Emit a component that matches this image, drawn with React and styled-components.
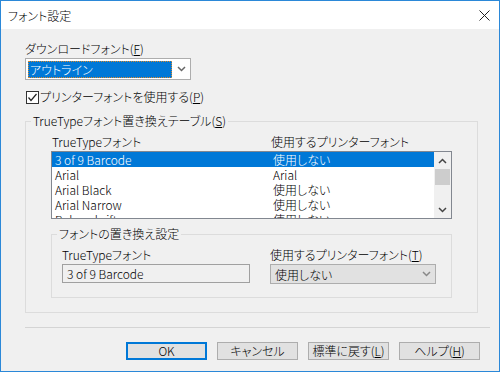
import styled, { createGlobalStyle } from 'styled-components';

const GlobalStyle = createGlobalStyle`
  html, body {
    margin: 0;
    padding: 0;
    background: #fff;
  }
  body {
    font-family: "Noto Sans CJK JP", "Noto Sans", sans-serif;
    font-size: 12px;
    font-weight: 300;
    color: #000;
    font-feature-settings: "palt";
  }
  u {
    text-underline-offset: 1px;
  }
`;

const Window = styled.div`
  width: 500px;
  height: 372px;
  box-sizing: border-box;
  border: 1px solid #2b88d8;
  background: #f0f0f0;
  display: flex;
  flex-direction: column;
`;

const TitleBar = styled.div`
  height: 28px;
  background: #fff;
  display: flex;
  align-items: center;
  justify-content: space-between;
  padding: 0 9px 0 7px;
`;

const Body = styled.div`
  flex: 1;
  display: flex;
  flex-direction: column;
  padding: 13px 0 0 24px;
`;

const Label = styled.div`
  line-height: 14px;
  white-space: nowrap;
`;

const Combo = styled.div`
  box-sizing: border-box;
  width: ${(p) => p.$width}px;
  height: ${(p) => p.$height}px;
  margin-top: 2px;
  border: 1px solid #adadad;
  background: ${(p) => (p.$flat ? '#e1e1e1' : '#fff')};
  display: flex;
  align-items: center;
  padding: 0 0 0 ${(p) => (p.$flat ? 4 : 2)}px;
`;

const ComboValue = styled.div`
  flex: 1;
  height: 17px;
  line-height: 17px;
  box-sizing: border-box;
  padding-left: ${(p) => (p.$selected ? 2 : 0)}px;
  background: ${(p) => (p.$selected ? '#0078d7' : 'transparent')};
  color: ${(p) => (p.$selected ? '#fff' : '#000')};
  outline: ${(p) => (p.$selected ? '1px dotted #d9892c' : 'none')};
  outline-offset: -1px;
`;

const ArrowBox = styled.div`
  width: 18px;
  display: flex;
  justify-content: center;
  align-items: center;
`;

const CheckRow = styled.div`
  margin-top: 10px;
  display: flex;
  align-items: center;
  gap: 1px;
  line-height: 14px;
`;

const CheckBox = styled.div`
  width: 13px;
  height: 13px;
  box-sizing: border-box;
  border: 1px solid #333;
  background: #fff;
  margin-left: 1px;
  display: flex;
  align-items: center;
  justify-content: center;
`;

const GroupBox = styled.div`
  box-sizing: border-box;
  width: ${(p) => p.$width};
  margin-top: ${(p) => p.$top}px;
  border: 1px solid #dcdcdc;
  padding: 0 ${(p) => p.$pad}px ${(p) => p.$bottom}px;
  display: flex;
  flex-direction: column;
`;

const GroupTitle = styled.div`
  align-self: flex-start;
  margin: -8px 0 0 ${(p) => p.$shift}px;
  padding: 0 2px;
  background: #f0f0f0;
  line-height: 14px;
  white-space: nowrap;
`;

const Columns = styled.div`
  display: grid;
  grid-template-columns: 219px 1fr;
  margin-top: 7px;
  padding-left: 1px;
  line-height: 14px;
`;

const ListBox = styled.div`
  margin-top: 2px;
  height: 68px;
  box-sizing: border-box;
  border: 1px solid #828790;
  background: #fff;
  display: flex;
`;

const Rows = styled.div`
  flex: 1;
  overflow: hidden;
`;

const Row = styled.div`
  height: 15px;
  line-height: 16px;
  display: grid;
  grid-template-columns: 218px 1fr;
  padding-left: 3px;
  white-space: nowrap;
  background: ${(p) => (p.$selected ? '#0078d7' : 'transparent')};
  color: ${(p) => (p.$selected ? '#fff' : '#000')};
`;

const ScrollBar = styled.div`
  width: 17px;
  background: #f0f0f0;
  display: flex;
  flex-direction: column;
`;

const ScrollButton = styled.div`
  height: 17px;
  display: flex;
  align-items: center;
  justify-content: center;
`;

const Thumb = styled.div`
  height: 16px;
  margin: 0 1px;
  background: #cdcdcd;
`;

const Track = styled.div`
  flex: 1;
`;

const SettingsGrid = styled.div`
  display: grid;
  grid-template-columns: 208px 166px;
  margin-top: 7px;
`;

const Field = styled.div`
  display: flex;
  flex-direction: column;
`;

const TextBox = styled.div`
  box-sizing: border-box;
  width: 188px;
  height: 19px;
  margin-top: 2px;
  border: 1px solid #a0a0a0;
  background: #f0f0f0;
  line-height: 17px;
  padding-left: 4px;
`;

const Separator = styled.div`
  width: 465px;
  height: 1px;
  margin-top: 14px;
  background: #d4d4d4;
`;

const ButtonRow = styled.div`
  display: flex;
  justify-content: flex-end;
  gap: 10px;
  margin: 14px 19px 0 0;
`;

const Button = styled.div`
  box-sizing: border-box;
  width: 81px;
  height: 18px;
  line-height: 16px;
  text-align: center;
  background: #e1e1e1;
  border: 1px solid ${(p) => (p.$default ? '#0078d7' : '#adadad')};
  box-shadow: ${(p) => (p.$default ? 'inset 0 0 0 1px #0078d7' : 'none')};
`;

const Chevron = ({ up, color = '#444' }) => (
  <svg width="9" height="6" viewBox="0 0 9 6">
    <polyline
      points={up ? '1,5 4.5,1.5 8,5' : '1,1 4.5,4.5 8,1'}
      fill="none"
      stroke={color}
      strokeWidth="1.5"
    />
  </svg>
);

const fonts = [
  ['3 of 9 Barcode', '使用しない'],
  ['Arial', 'Arial'],
  ['Arial Black', '使用しない'],
  ['Arial Narrow', '使用しない'],
  ['Bahnschrift', '使用しない'],
];

export default function App() {
  return (
    <>
      <GlobalStyle />
      <Window>
        <TitleBar>
          <span>フォント設定</span>
          <svg width="11" height="11" viewBox="0 0 11 11">
            <path d="M0.5 0.5 L10.5 10.5 M10.5 0.5 L0.5 10.5" stroke="#222" strokeWidth="1" />
          </svg>
        </TitleBar>
        <Body>
          <Label>
            ダウンロードフォント(<u>F</u>)
          </Label>
          <Combo $width={166} $height={22}>
            <ComboValue $selected>アウトライン</ComboValue>
            <ArrowBox>
              <Chevron color="#666" />
            </ArrowBox>
          </Combo>

          <CheckRow>
            <CheckBox>
              <svg width="11" height="11" viewBox="0 0 11 11">
                <polyline points="1.5,5.5 4,8.5 9.5,2" fill="none" stroke="#222" strokeWidth="1.2" />
              </svg>
            </CheckBox>
            <span>
              プリンターフォントを使用する(<u>P</u>)
            </span>
          </CheckRow>

          <GroupBox $width="453px" $top={17} $pad={25} $bottom={14}>
            <GroupTitle $shift={-20}>
              TrueTypeフォント置き換えテーブル(<u>S</u>)
            </GroupTitle>
            <Columns>
              <span>TrueTypeフォント</span>
              <span>使用するプリンターフォント</span>
            </Columns>
            <ListBox>
              <Rows>
                {fonts.map(([name, printer], i) => (
                  <Row key={name} $selected={i === 0}>
                    <span>{name}</span>
                    <span>{printer}</span>
                  </Row>
                ))}
              </Rows>
              <ScrollBar>
                <ScrollButton>
                  <Chevron up />
                </ScrollButton>
                <Thumb />
                <Track />
                <ScrollButton>
                  <Chevron />
                </ScrollButton>
              </ScrollBar>
            </ListBox>

            <GroupBox $width="100%" $top={15} $pad={10} $bottom={13}>
              <GroupTitle $shift={-5}>フォントの置き換え設定</GroupTitle>
              <SettingsGrid>
                <Field>
                  <Label>TrueTypeフォント</Label>
                  <TextBox>3 of 9 Barcode</TextBox>
                </Field>
                <Field>
                  <Label>
                    使用するプリンターフォント(<u>T</u>)
                  </Label>
                  <Combo $width={166} $height={20} $flat>
                    <ComboValue>使用しない</ComboValue>
                    <ArrowBox>
                      <Chevron color="#888" />
                    </ArrowBox>
                  </Combo>
                </Field>
              </SettingsGrid>
            </GroupBox>
          </GroupBox>

          <Separator />
          <ButtonRow>
            <Button $default>OK</Button>
            <Button>キャンセル</Button>
            <Button>
              標準に戻す(<u>L</u>)
            </Button>
            <Button>
              ヘルプ(<u>H</u>)
            </Button>
          </ButtonRow>
        </Body>
      </Window>
    </>
  );
}
